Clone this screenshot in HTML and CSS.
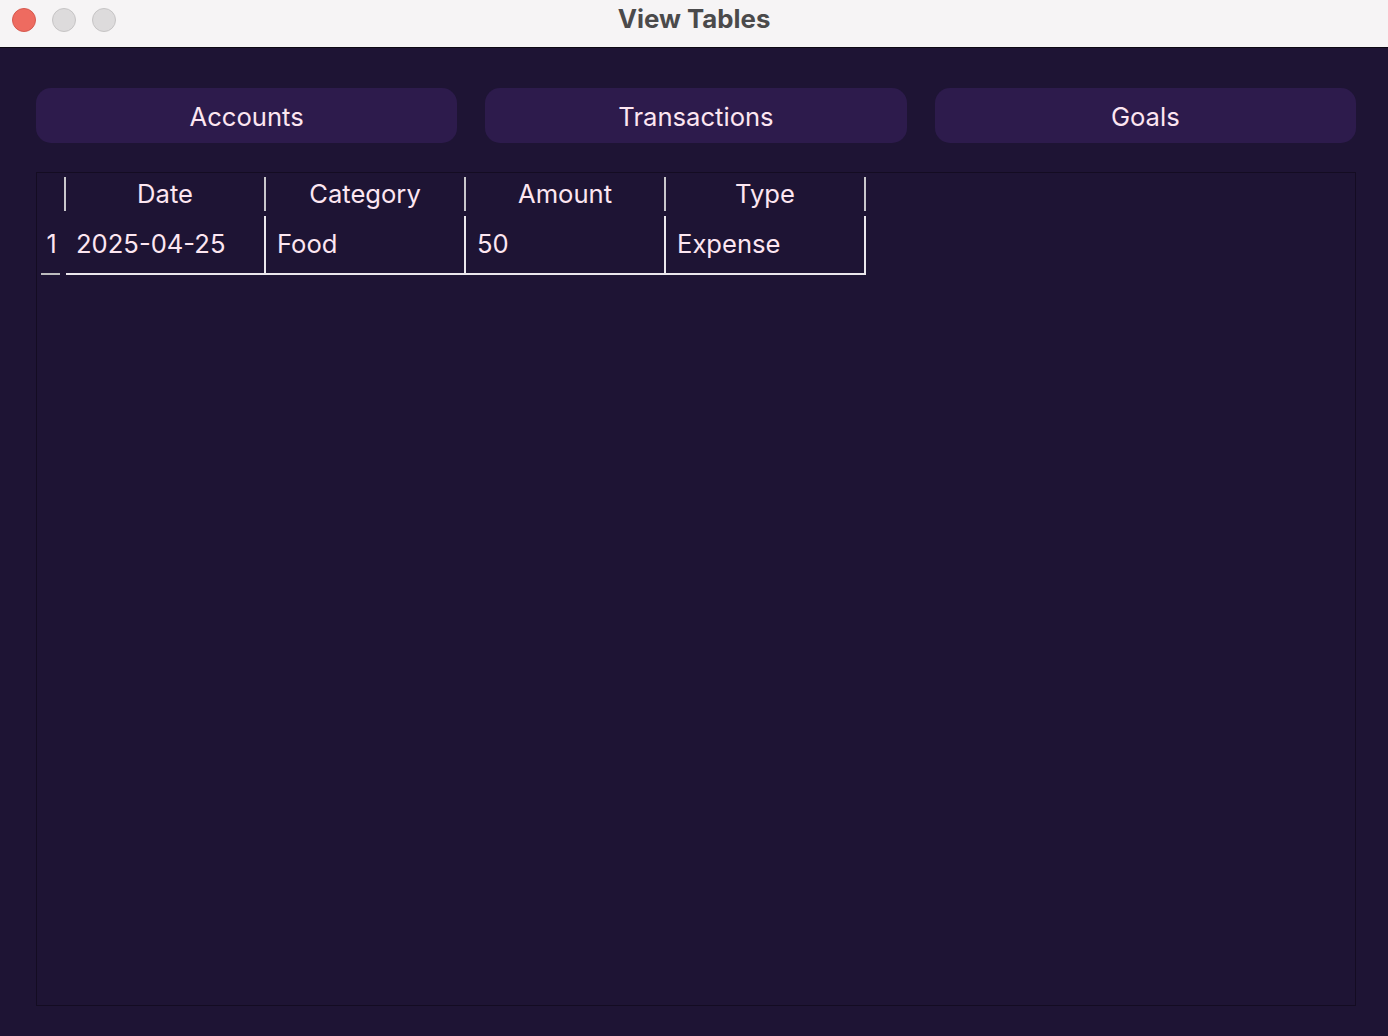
FILE: index.html
```html
<!DOCTYPE html>
<html>
<head>
<meta charset="utf-8">
<title>View Tables</title>
<link rel="stylesheet" href="styles.css">
</head>
<body>
<div class="window">
  <header class="titlebar">
    <div class="lights">
      <span class="light red"></span>
      <span class="light gray"></span>
      <span class="light gray"></span>
    </div>
    <div class="title">View Tables</div>
  </header>
  <main class="content">
    <nav class="tabs">
      <button class="tab">Accounts</button>
      <button class="tab">Transactions</button>
      <button class="tab">Goals</button>
    </nav>
    <section class="frame">
      <div class="hrow">
        <div class="corner"></div>
        <div class="hcell">Date</div>
        <div class="hcell">Category</div>
        <div class="hcell">Amount</div>
        <div class="hcell last">Type</div>
      </div>
      <div class="brow">
        <div class="rowhead">1</div>
        <div class="bcell first">2025-04-25</div>
        <div class="bcell">Food</div>
        <div class="bcell">50</div>
        <div class="bcell last">Expense</div>
      </div>
    </section>
  </main>
</div>
</body>
</html>
```

FILE: styles.css
```css
html, body {
  margin: 0;
  padding: 0;
}
body {
  width: 1388px;
  height: 1036px;
  overflow: hidden;
  background: #1e1434;
  font-family: Inter, "Noto Sans", sans-serif;
}
.window {
  display: flex;
  flex-direction: column;
  height: 1036px;
}
.titlebar {
  position: relative;
  height: 47px;
  background: #f6f4f5;
  border-bottom: 1px solid #0d0913;
  display: flex;
  align-items: center;
  justify-content: center;
  flex: none;
}
.lights {
  position: absolute;
  left: 12px;
  top: 8px;
  display: flex;
  gap: 16px;
}
.light {
  width: 22px;
  height: 22px;
  border-radius: 50%;
  display: block;
}
.light.red {
  background: #ee6b60;
  border: 1px solid #d6594f;
}
.light.gray {
  background: #dddbdc;
  border: 1px solid #c6c4c5;
}
.title {
  font-size: 25.8px;
  font-weight: 700;
  color: #4b4a4b;
  margin-top: -11px;
}
.content {
  flex: 1;
  padding: 40px 32px 30px 36px;
  display: flex;
  flex-direction: column;
  gap: 29px;
}
.tabs {
  display: flex;
  gap: 28px;
  height: 55px;
  flex: none;
}
.tab {
  flex: 1;
  border: none;
  border-radius: 15px;
  background: #2d1b4c;
  color: #fde6f1;
  font-family: Inter, "Noto Sans", sans-serif;
  font-size: 25.6px;
  padding: 2px 0 0;
}
.frame {
  flex: 1;
  border: 1px solid #140c22;
  padding-top: 4px;
  color: #fde6f1;
  font-size: 25.6px;
}
.hrow {
  display: flex;
  height: 34px;
  font-size: 25.6px;
}
.corner {
  width: 27px;
}
.hcell {
  width: 198px;
  border-left: 2px solid #c9c6cb;
  display: flex;
  align-items: center;
  justify-content: center;
  padding-bottom: 1px;
  box-sizing: content-box;
}
.hcell.last {
  border-right: 2px solid #c9c6cb;
}
.brow {
  display: flex;
  margin-top: 5px;
  height: 59px;
}
.rowhead {
  width: 19px;
  margin: 0 4px;
  border-bottom: 2px solid #bdbcbe;
  display: flex;
  align-items: center;
  justify-content: center;
  padding: 0 0 2px 2px;
  box-sizing: border-box;
  font-size: 25px;
}
.bcell {
  width: 200px;
  border-left: 2px solid #ebe7ec;
  border-bottom: 2px solid #ebe7ec;
  display: flex;
  align-items: center;
  padding: 0 0 3px 11px;
  box-sizing: border-box;
}
.bcell.first {
  border-left: none;
  margin-left: 2px;
  width: 198px;
  padding-left: 10px;
}
.bcell.last {
  border-right: 2px solid #ebe7ec;
  width: 202px;
}
```
